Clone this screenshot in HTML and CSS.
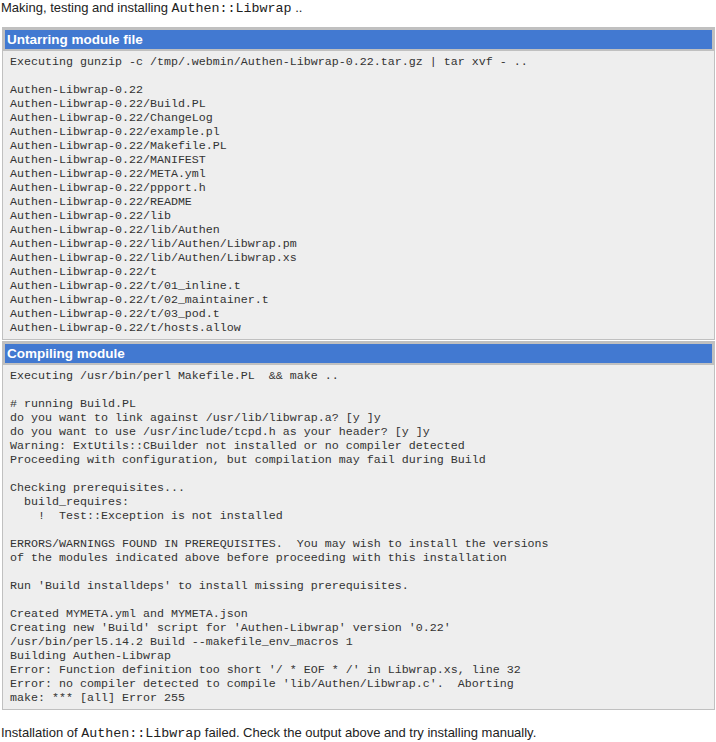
FILE: index.html
```html
<!DOCTYPE html>
<html>
<head>
<meta charset="utf-8">
<link rel="stylesheet" href="styles.css">
</head>
<body>
<p class="msg">Making, testing and installing <tt class="code">Authen::Libwrap</tt> ..</p>
<div class="section">
  <div class="head">Untarring module file</div>
  <pre class="out">Executing gunzip -c /tmp/.webmin/Authen-Libwrap-0.22.tar.gz | tar xvf - ..

Authen-Libwrap-0.22
Authen-Libwrap-0.22/Build.PL
Authen-Libwrap-0.22/ChangeLog
Authen-Libwrap-0.22/example.pl
Authen-Libwrap-0.22/Makefile.PL
Authen-Libwrap-0.22/MANIFEST
Authen-Libwrap-0.22/META.yml
Authen-Libwrap-0.22/ppport.h
Authen-Libwrap-0.22/README
Authen-Libwrap-0.22/lib
Authen-Libwrap-0.22/lib/Authen
Authen-Libwrap-0.22/lib/Authen/Libwrap.pm
Authen-Libwrap-0.22/lib/Authen/Libwrap.xs
Authen-Libwrap-0.22/t
Authen-Libwrap-0.22/t/01_inline.t
Authen-Libwrap-0.22/t/02_maintainer.t
Authen-Libwrap-0.22/t/03_pod.t
Authen-Libwrap-0.22/t/hosts.allow</pre>
</div>
<div class="section section-next">
  <div class="head">Compiling module</div>
  <pre class="out">Executing /usr/bin/perl Makefile.PL  &amp;&amp; make ..

# running Build.PL
do you want to link against /usr/lib/libwrap.a? [y ]y
do you want to use /usr/include/tcpd.h as your header? [y ]y
Warning: ExtUtils::CBuilder not installed or no compiler detected
Proceeding with configuration, but compilation may fail during Build

Checking prerequisites...
  build_requires:
    !  Test::Exception is not installed

ERRORS/WARNINGS FOUND IN PREREQUISITES.  You may wish to install the versions
of the modules indicated above before proceeding with this installation

Run 'Build installdeps' to install missing prerequisites.

Created MYMETA.yml and MYMETA.json
Creating new 'Build' script for 'Authen-Libwrap' version '0.22'
/usr/bin/perl5.14.2 Build --makefile_env_macros 1
Building Authen-Libwrap
Error: Function definition too short '/ * EOF * /' in Libwrap.xs, line 32
Error: no compiler detected to compile 'lib/Authen/Libwrap.c'.  Aborting
make: *** [all] Error 255</pre>
</div>
<p class="msg msg-end">Installation of <tt class="code">Authen::Libwrap</tt> failed. Check the output above and try installing manually.</p>
</body>
</html>
```
FILE: styles.css
```css
html, body {
  margin: 0;
  padding: 0;
  background: #ffffff;
}
body {
  font-family: "Liberation Sans", Arial, sans-serif;
  font-size: 13px;
  color: #222222;
}
.msg {
  margin: 0 0 11px 1px;
  line-height: 15px;
}
.msg-end {
  margin-top: 15px;
}
.code {
  font-family: "Liberation Mono", "Courier New", monospace;
  font-size: 13.33px;
}
.section {
  margin: 0 1px 0 2px;
  border: 1px solid #c0c0c0;
  background: #eeeeee;
}
.section-next {
  margin-top: 1px;
}
.head {
  background: #4279d1;
  border: 2px solid #c0c0c0;
  color: #ffffff;
  font-weight: bold;
  font-size: 13.5px;
  line-height: 19px;
  height: 19px;
  padding: 0 2px;
}
.out {
  margin: 0;
  padding: 4px 5px 4px 7px;
  font-family: "Liberation Mono", "Courier New", monospace;
  font-size: 11.67px;
  line-height: 14px;
  color: #333333;
}
```
